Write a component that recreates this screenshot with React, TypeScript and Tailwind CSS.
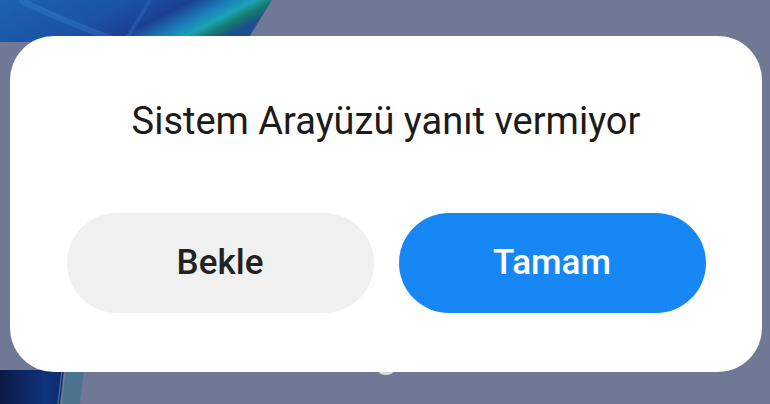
import React from 'react';

const Wallpaper: React.FC = () => (
  <svg className="absolute inset-0" width="770" height="404" viewBox="0 0 770 404">
    <defs>
      <linearGradient id="wp" x1="0" y1="0" x2="1" y2="0.3">
        <stop offset="0" stopColor="#1c63b0" />
        <stop offset="0.45" stopColor="#1a52a6" />
        <stop offset="0.65" stopColor="#1b3f92" />
        <stop offset="0.78" stopColor="#1a7fb8" />
        <stop offset="0.86" stopColor="#1ba3b6" />
        <stop offset="0.93" stopColor="#167a6e" />
        <stop offset="1" stopColor="#1b4f8c" />
      </linearGradient>
      <linearGradient id="bl" x1="0" y1="0" x2="1" y2="0">
        <stop offset="0" stopColor="#0a1a44" />
        <stop offset="0.7" stopColor="#10327e" />
        <stop offset="1" stopColor="#0f2c68" />
      </linearGradient>
    </defs>
    <polygon points="0,0 272,0 246,42 0,42" fill="url(#wp)" />
    <path d="M20 0 C 60 20, 90 30, 120 42" stroke="#3a86cc" strokeOpacity="0.35" strokeWidth="6" fill="none" />
    <path d="M150 0 L 125 42" stroke="#2f6fc0" strokeOpacity="0.4" strokeWidth="4" fill="none" />
    <polygon points="0,370 64,370 60,404 0,404" fill="url(#bl)" />
    <line x1="62" y1="370" x2="58" y2="404" stroke="#7fb0d6" strokeOpacity="0.5" strokeWidth="1.2" />
    <polygon points="66,370 84,370 80,404 62,404" fill="#1e6f86" fillOpacity="0.45" />
    <ellipse cx="386" cy="372" rx="7" ry="3" fill="#d9dce2" />
  </svg>
);

export default function App() {
  return (
    <div
      className="relative w-[770px] h-[404px] overflow-hidden bg-[#6f7995]"
      style={{ fontFamily: 'Roboto, "Noto Sans", sans-serif' }}
    >
      <Wallpaper />
      <div className="relative pt-[36px] pl-[10px]">
        <div className="w-[752px] h-[336px] rounded-[44px] bg-white flex flex-col items-center">
          <h1 className="mt-[66px] text-[38px] leading-none font-normal text-[#1b1b1b]">
            Sistem Arayüzü yanıt vermiyor
          </h1>
          <div className="mt-[73px] flex gap-[25px]">
            <button className="w-[307px] h-[100px] rounded-full bg-[#f0f0f0] text-[35px] font-medium text-[#222222]">
              Bekle
            </button>
            <button className="w-[307px] h-[100px] rounded-full bg-[#1887f6] text-[35px] font-medium text-white">
              Tamam
            </button>
          </div>
        </div>
      </div>
    </div>
  );
}
